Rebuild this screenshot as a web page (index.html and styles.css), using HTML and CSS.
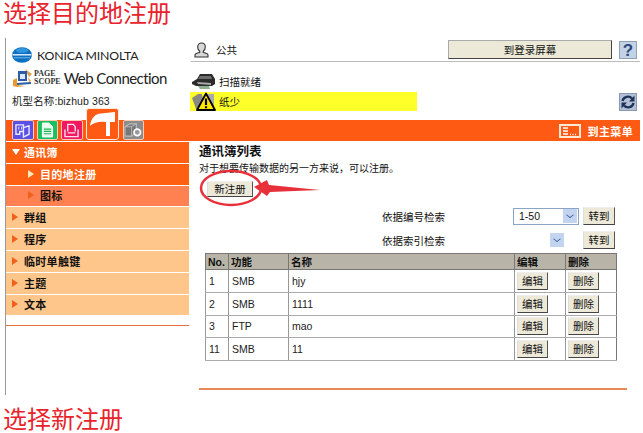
FILE: index.html
```html
<!DOCTYPE html>
<html lang="zh-CN">
<head>
  <meta charset="UTF-8" />
  <title>选择目的地注册</title>
  <link rel="stylesheet" href="styles.css">
</head>
<body>
  <h1 class="caption">选择目的地注册</h1>

  <div class="frame">
    <div class="head">
      <div class="brand">
        <div class="konica">
          <svg class="globe" viewBox="0 0 20 16" width="20" height="16">
            <ellipse cx="10" cy="8" rx="10" ry="7.800" fill="#0b6fc2"/>
            <ellipse cx="10" cy="3.500" rx="6" ry="2.500" fill="#2f96dc"/>
            <path d="M.5 7.800h19" stroke="#e8f5ff" stroke-width="1.400" fill="none"/>
            <path d="M2 10.800h16" stroke="#8fcbf0" stroke-width=".8" fill="none"/>
          </svg>
          <span class="konica-name">KONICA MINOLTA</span>
        </div>
        <div class="pagescope">
          <svg viewBox="0 0 21 20" width="21" height="20">
            <path d="M1 12l4-2v7l8 1-8 1-4-1z" fill="#e89a30"/>
            <path d="M13 1l7 5-3 3z" fill="#d8a050"/>
            <rect x="6" y="3" width="9" height="10" fill="#2a5ca8"/>
            <rect x="8" y="6" width="5" height="5" fill="#dfe8f5"/>
            <path d="M5 16l14-1" stroke="#2a5ca8" stroke-width="2"/>
            <path d="M16 9l3 4-2 1z" fill="#e89a30"/>
          </svg>
          <span class="scope-word">PAGE<br>SCOPE</span>
          <span class="web-name">Web Connection</span>
        </div>
        <div class="model">机型名称:bizhub 363</div>
      </div>

      <div class="status">
        <div class="user-row">
          <svg class="user-icon" viewBox="0 0 15 16" width="15" height="16">
            <path d="M7.500 1c2.300 0 3.800 1.700 3.800 4s-1 3.500-2 4.200v1.300c2.500.5 4.700 1.300 4.700 2.500V15H1v-2c0-1.200 2.200-2 4.700-2.500V9.200c-1-.7-2-2-2-4.200S5.200 1 7.500 1z" fill="#d8d8d8" stroke="#333" stroke-width="1.100"/>
          </svg>
          <span class="user-name">公共</span>
          <button class="btn login-btn">到登录屏幕</button>
          <span class="help">?</span>
        </div>
        <div class="device-row">
          <svg viewBox="0 0 25 16" width="25" height="16">
            <path d="M1 9l5-3 3-5h12l3 5v5l-3 2H5l-4-2z" fill="#2b2b2b"/>
            <path d="M9 3h11l1 3H7z" fill="#6d6d6d"/>
            <path d="M6 9l14 1v2L7 11z" fill="#aaa"/>
            <path d="M7 13h11l1 3H9z" fill="#8fb090"/>
          </svg>
          <span>扫描就绪</span>
        </div>
        <div class="alert-row">
          <div class="alert">
            <svg viewBox="0 0 26 19" width="26" height="19">
              <path d="M2 6l6-4h4l3 15H6z" fill="#8a8a80"/>
              <path d="M17 2h7v13h-4z" fill="#aaa"/>
              <path d="M16 1.500L25 18H7z" fill="#ffe800" stroke="#000" stroke-width="1.800" stroke-linejoin="round"/>
              <path d="M16 6.500v6.500M16 14.300v2" stroke="#000" stroke-width="2.200"/>
            </svg>
            <span>纸少</span>
          </div>
          <svg class="refresh" viewBox="0 0 18 18" width="18" height="18">
            <rect x=".5" y=".5" width="17" height="17" fill="#b4c0d6" stroke="#8897b2"/>
            <path d="M3.500 8a5.500 5.500 0 0 1 9.500-2.500M14.500 10a5.500 5.500 0 0 1-9.500 2.500" fill="none" stroke="#1f3358" stroke-width="2.400"/>
            <path d="M15.500 2.500v6h-5.500zM2.500 15.500v-6h5.500z" fill="#1f3358"/>
          </svg>
        </div>
      </div>
    </div>

    <div class="tabbar">
      <div class="tabs">
        <span class="tab tab-blue">
          <svg viewBox="0 0 18 16" width="17" height="15"><path d="M2 2h8v7H6v3H2zM10 5l6-2v9l-6 3V9" fill="none" stroke="#e8e8ff" stroke-width="1.500"/><path d="M5 4v3M8 4v3" stroke="#e8e8ff"/></svg>
        </span>
        <span class="tab tab-green">
          <svg viewBox="0 0 14 17" width="13" height="16"><path d="M1.500 1h7l4 4v11h-11z" fill="#e8fff0" stroke="#fff"/><path d="M3 7.500h8M3 10h8M3 12.500h8" stroke="#18b050" stroke-width="1.200"/></svg>
        </span>
        <span class="tab tab-pink">
          <svg viewBox="0 0 18 16" width="17" height="15"><path d="M5 9V1.500h6L13 4v5M2 7v7.500h14V7M5 10.500h8" fill="none" stroke="#ffe0e8" stroke-width="1.500"/></svg>
        </span>
        <span class="tab tab-active">
          <svg viewBox="0 0 25 24" width="25" height="24"><path d="M0 14C1 6 5 2 11 1.500L25 0v10h-5v14h-4V10C9 9 3 11 0 14z" fill="#fff"/></svg>
        </span>
        <span class="tab tab-gray">
          <svg viewBox="0 0 20 17" width="19" height="16"><path d="M1 5l5-3h7v8l-5 5H1z" fill="#777" stroke="#bbb" stroke-width="1.200"/><path d="M1 5h7v10M8 5l5-3" stroke="#bbb" fill="none"/><circle cx="14" cy="11" r="3.500" fill="#999" stroke="#fff" stroke-width="1.800"/></svg>
        </span>
      </div>
      <div class="to-main">
        <svg viewBox="0 0 22 14" width="22" height="14"><rect x="1" y="1" width="20" height="12" fill="none" stroke="#ffe8d8" stroke-width="2"/><path d="M4 4h5M4 7h5M4 10h5" stroke="#fff" stroke-width="1.300"/><path d="M11 10.500h1M13.500 10.500h1M16 10.500h1" stroke="#fff" stroke-width="1.500"/></svg>
        <span>到主菜单</span>
      </div>
    </div>

    <div class="content">
      <div class="side">
        <ul class="menu">
          <li class="menu-item open"><span class="arrow-down"></span>通讯簿</li>
          <li class="menu-item sub current"><span class="arrow"></span>目的地注册</li>
          <li class="menu-item sub"><span class="arrow"></span>图标</li>
          <li class="menu-item"><span class="arrow"></span>群组</li>
          <li class="menu-item"><span class="arrow"></span>程序</li>
          <li class="menu-item"><span class="arrow"></span>临时单触键</li>
          <li class="menu-item"><span class="arrow"></span>主题</li>
          <li class="menu-item"><span class="arrow"></span>文本</li>
        </ul>
        <div class="side-rule"></div>
      </div>

      <div class="main">
        <h2 class="list-title">通讯簿列表</h2>
        <p class="list-desc">对于想要传输数据的另一方来说，可以注册。</p>
        <button class="btn new-btn">新注册</button>

        <svg class="mark" viewBox="0 0 125 44" width="125" height="44">
          <ellipse cx="32" cy="20" rx="30" ry="17" fill="none" stroke="#e8303a" stroke-width="2.500"/>
          <path d="M55 19l13-7 2 5 51 5-50 2-3 4z" fill="#e8303a"/>
        </svg>

        <div class="search">
          <div class="search-row">
            <label>依据编号检索</label>
            <span class="select"><span class="select-val">1-50</span><span class="select-btn"></span></span>
            <button class="btn go-btn">转到</button>
          </div>
          <div class="search-row">
            <label>依据索引检索</label>
            <span class="select select-empty"><span class="select-val"></span><span class="select-btn"></span></span>
            <button class="btn go-btn">转到</button>
          </div>
        </div>

        <table class="dest">
          <thead>
            <tr><th class="col-no">No.</th><th class="col-fn">功能</th><th>名称</th><th class="col-act">编辑</th><th class="col-act">删除</th></tr>
          </thead>
          <tbody>
            <tr><td>1</td><td>SMB</td><td>hjy</td><td><button class="btn row-btn">编辑</button></td><td><button class="btn row-btn">删除</button></td></tr>
            <tr><td>2</td><td>SMB</td><td>1111</td><td><button class="btn row-btn">编辑</button></td><td><button class="btn row-btn">删除</button></td></tr>
            <tr><td>3</td><td>FTP</td><td>mao</td><td><button class="btn row-btn">编辑</button></td><td><button class="btn row-btn">删除</button></td></tr>
            <tr><td>11</td><td>SMB</td><td>11</td><td><button class="btn row-btn">编辑</button></td><td><button class="btn row-btn">删除</button></td></tr>
          </tbody>
        </table>

        <div class="main-rule"></div>
      </div>
    </div>
  </div>

  <h1 class="caption caption-bottom">选择新注册</h1>
</body>
</html>
```

FILE: styles.css
```css
* {
  box-sizing: border-box;
  margin: 0;
  padding: 0;
}

html, body {
  width: 643px;
  height: 433px;
  overflow: hidden;
  background: #fff;
}

body {
  font-family: "Liberation Sans", "Noto Sans CJK SC", sans-serif;
  font-size: 10.5px;
  color: #111;
}

.caption {
  height: 38px;
  padding-left: 3px;
  font-family: "Liberation Sans", "Noto Sans CJK SC", sans-serif;
  font-size: 24px;
  font-weight: 400;
  line-height: 28px;
  color: #e8232c;
}

.caption-bottom {
  padding-top: 12px;
  line-height: 26px;
}

.frame {
  height: 357px;
  margin: 0 3px 0 5px;
  border-left: 1px solid #999;
}

/* header */
.head {
  display: flex;
  height: 82px;
}

.brand {
  width: 184px;
  padding: 9px 0 0 6px;
}

.konica {
  display: flex;
  align-items: center;
  gap: 5px;
  height: 16px;
}

.konica-name {
  font-family: Lato, sans-serif;
  font-size: 12.300px;
  letter-spacing: -0.15px;
  white-space: nowrap;
  color: #222;
}

.pagescope {
  display: flex;
  align-items: center;
  height: 20px;
  margin-top: 5px;
}

.scope-word {
  margin-left: 1px;
  font-family: "Liberation Serif", serif;
  font-size: 8px;
  font-weight: 700;
  line-height: 8px;
  color: #333;
}

.web-name {
  margin-left: 3px;
  font-family: Lato, sans-serif;
  font-size: 15px;
  letter-spacing: -0.55px;
  white-space: nowrap;
  color: #222;
}

.model {
  margin-top: 5px;
  line-height: 16px;
  letter-spacing: .1px;
  color: #222;
}

.status {
  flex: 1;
}

.user-row {
  display: flex;
  align-items: center;
  height: 24px;
  margin-left: 1px;
  padding: 0 3px 0 3px;
  border-bottom: 1px solid #bbb;
}

.user-name {
  margin-left: 7px;
}

.btn {
  font-family: "Noto Sans CJK SC", sans-serif;
  font-size: 10.5px;
  color: #111;
  background: #ece9d8;
  border: 1px solid;
  border-color: #eee #555 #444 #ddd;
}

.login-btn {
  width: 164px;
  height: 19px;
  margin-left: auto;
  line-height: 14px;
  border-color: #aaa #444 #444 #aaa;
}

.help {
  width: 18px;
  height: 18px;
  margin-left: 7px;
  font-size: 17px;
  font-weight: 700;
  line-height: 18px;
  text-align: center;
  color: #2a4a78;
  background: #c4d2e6;
  border: 1px solid #8fa0b8;
}

.device-row {
  display: flex;
  align-items: center;
  gap: 3px;
  height: 16px;
  margin-top: 11px;
  padding-left: 1px;
}

.alert-row {
  display: flex;
  align-items: center;
  justify-content: space-between;
  margin-top: 3px;
  padding-right: 3px;
}

.alert {
  display: flex;
  align-items: center;
  gap: 3px;
  width: 227px;
  height: 19px;
  background: #ffff2a;
}

/* tab bar */
.tabbar {
  display: flex;
  justify-content: space-between;
  align-items: center;
  height: 21px;
  padding-left: 6px;
  background: #ff5a14;
}

.tabs {
  display: flex;
  align-items: flex-end;
  gap: 3px;
  height: 21px;
  padding-bottom: 1px;
}

.tab {
  display: flex;
  align-items: center;
  justify-content: center;
  width: 21.500px;
  height: 20px;
  border: 1px solid #ffc8b0;
  border-radius: 2px;
}

.tab-blue { background: #5a50e8; }
.tab-green { background: #18c060; }
.tab-pink { background: #f01860; }
.tab-gray { background: #8c8c8c; margin-left: 1px; }

.tab-active {
  width: 33px;
  height: 32px;
  margin-top: -12px;
  background: #ff5a14;
  border-color: #ffe8dc;
  border-radius: 3px;
}

.to-main {
  display: flex;
  align-items: center;
  gap: 7px;
  padding-right: 7px;
  font-family: "Noto Sans CJK SC", sans-serif;
  font-size: 11px;
  font-weight: 700;
  letter-spacing: .35px;
  color: #fff;
}

/* sidebar + main */
.content {
  display: flex;
  margin-top: 1px;
}

.side {
  width: 183px;
  flex: none;
}

.menu {
  list-style: none;
}

.menu-item {
  display: flex;
  align-items: center;
  height: 20.800px;
  margin-bottom: 1px;
  padding: 0 0 1px 6px;
  font-family: "Noto Sans CJK SC", sans-serif;
  font-size: 11px;
  font-weight: 700;
  line-height: 14px;
  letter-spacing: .3px;
  color: #111;
  background: #ffc68c;
}

.menu-item.open,
.menu-item.current {
  color: #fff;
  background: #ff5f10;
}

.menu-item.sub {
  padding-left: 22px;
  background: #ff8050;
}

.menu-item.sub.current {
  background: #ff5f10;
}

.arrow {
  width: 0;
  height: 0;
  margin-right: 6px;
  border-left: 6px solid #f0601c;
  border-top: 4px solid transparent;
  border-bottom: 4px solid transparent;
}

.current .arrow {
  border-left-color: #ffe8c0;
}

.arrow-down {
  width: 0;
  height: 0;
  margin-right: 4px;
  border-top: 6px solid #fff;
  border-left: 4px solid transparent;
  border-right: 4px solid transparent;
}

.side-rule {
  height: 1px;
  margin-top: 10px;
  background: #e8703a;
}

.main {
  position: relative;
  flex: 1;
  padding-left: 10px;
}

.list-title {
  height: 18px;
  padding-top: 2px;
  font-family: "Noto Sans CJK SC", sans-serif;
  font-size: 12.500px;
  font-weight: 700;
  line-height: 14px;
}

.list-desc {
  height: 21px;
  font-size: 10px;
  line-height: 17px;
}

.new-btn {
  display: block;
  width: 46px;
  height: 16px;
  margin-left: 8px;
  line-height: 12px;
}

/* hand-drawn annotation over the page */
.mark {
  position: absolute;
  left: 10px;
  top: 26px;
}

.search {
  margin-top: 7px;
  padding-right: 25px;
}

.search-row {
  display: flex;
  align-items: center;
  justify-content: flex-end;
  height: 24px;
}

.search-row label {
  margin-right: 68px;
}

.select {
  display: flex;
  justify-content: space-between;
  align-items: center;
  width: 66px;
  height: 17px;
  padding: 0 1px 0 5px;
  background: #fff;
  border: 1px solid #8aa4c4;
}

.select-empty {
  width: 53px;
  margin-right: 13px;
  border-color: transparent;
}

.select-btn {
  position: relative;
  width: 14px;
  height: 14px;
  background: #c2d4f0;
}

.select-btn::after {
  content: '';
  position: absolute;
  left: 4px;
  top: 3px;
  width: 5px;
  height: 5px;
  border-right: 1.500px solid #3a5a98;
  border-bottom: 1.500px solid #3a5a98;
  transform: scale(.9, .7) rotate(45deg);
}

.go-btn {
  width: 32px;
  height: 18px;
  margin-left: 4px;
  line-height: 14px;
}

.dest {
  width: 412px;
  height: 108px;
  margin: 1px 0 0 6px;
  border-collapse: collapse;
  table-layout: fixed;
  border: 1px solid #777;
}

.dest th {
  height: 16px;
  padding-left: 2px;
  font-family: "Liberation Sans", "Noto Sans CJK SC", sans-serif;
  font-size: 10.500px;
  font-weight: 700;
  line-height: 12px;
  text-align: left;
  background: #b8b4a8;
  border-left: 1px solid #777;
  border-bottom: 1px solid #777;
}

.dest td {
  height: 22.500px;
  padding-left: 3px;
  color: #222;
  border-left: 1px solid #999;
  border-bottom: 1px solid #aaa;
}

.dest .col-no { width: 23px; }
.dest .col-fn { width: 60px; }
.dest .col-act { width: 51px; }

.row-btn {
  display: block;
  width: 31px;
  height: 18px;
  margin-left: -1px;
  line-height: 14px;
}

.main-rule {
  width: 428px;
  height: 2px;
  margin-top: 27px;
  background: #e88a58;
}
```
